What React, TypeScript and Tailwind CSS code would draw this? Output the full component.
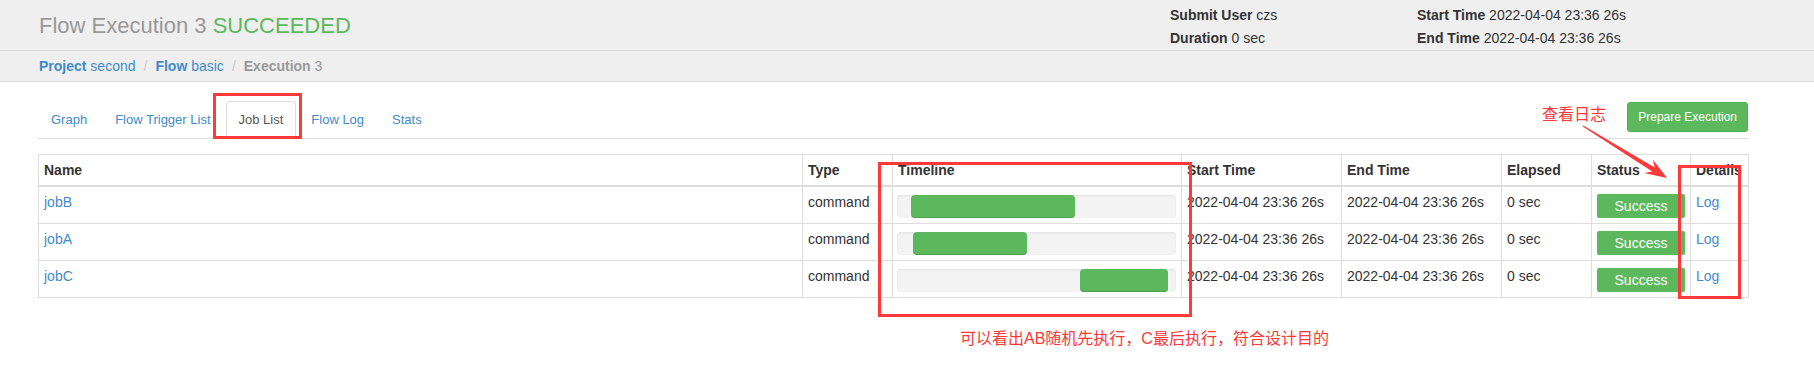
import React from "react";

const jobs = [
  { name: "jobB", left: 14, width: 164 },
  { name: "jobA", left: 16, width: 114 },
  { name: "jobC", left: 183, width: 88 },
];

const tabs = ["Graph", "Flow Trigger List", "Job List", "Flow Log", "Stats"];

export default function App() {
  return (
    <div className="relative w-[1814px] h-[369px] overflow-hidden bg-white font-['Liberation_Sans',Arial,sans-serif] text-[14px] text-[#333]">
      {/* Header */}
      <header className="h-[51px] bg-[#efefef] border-b border-[#dcdcdc] flex">
        <div className="flex-1 flex items-center pl-[39px] text-[22px] text-[#999]">
          Flow Execution 3&nbsp;<span className="text-[#5cb85c]">SUCCEEDED</span>
        </div>
        <div className="w-[644px] grid grid-cols-[247px_1fr] leading-[20px] pt-[5px] text-[14px] text-[#333]">
          <div>
            <b>Submit User</b> czs
          </div>
          <div>
            <b>Start Time</b> 2022-04-04 23:36 26s
          </div>
          <div>
            <b>Duration</b> 0 sec
          </div>
          <div>
            <b>End Time</b> 2022-04-04 23:36 26s
          </div>
        </div>
      </header>

      {/* Breadcrumb */}
      <div className="h-[31px] bg-[#efefef] border-b border-[#dcdcdc] flex items-center pl-[39px] leading-[20px]">
        <a className="text-[#428bca]">
          <b>Project</b> second
        </a>
        <span className="text-[#ccc] px-[8px]">/</span>
        <a className="text-[#428bca]">
          <b>Flow</b> basic
        </a>
        <span className="text-[#ccc] px-[8px]">/</span>
        <span className="text-[#999]">
          <b>Execution</b> 3
        </span>
      </div>

      {/* Main */}
      <div className="ml-[38px] w-[1710px]">
        <div className="mt-[19px] flex items-start border-b border-[#ddd]">
          {tabs.map((t) => (
            <div
              key={t}
              className={
                t === "Job List"
                  ? "mr-[2px] mb-[-1px] px-[12px] py-[8px] leading-[20px] text-[13px] text-[#555] bg-white border border-[#ddd] border-b-white rounded-t-[4px]"
                  : "mr-[2px] mb-[-1px] px-[12px] py-[8px] leading-[20px] text-[13px] text-[#428bca] border border-transparent rounded-t-[4px]"
              }
            >
              {t}
            </div>
          ))}
          <button className="ml-auto mt-[1px] h-[30px] px-[10px] text-[12px] leading-[18px] text-white bg-[#5cb85c] border border-[#4cae4c] rounded-[3px]">
            Prepare Execution
          </button>
        </div>

        <table className="mt-[15px] w-[1710px] table-fixed border-collapse border border-[#ddd]">
          <colgroup>
            <col className="w-[764px]" />
            <col className="w-[90px]" />
            <col className="w-[289px]" />
            <col className="w-[160px]" />
            <col className="w-[160px]" />
            <col className="w-[90px]" />
            <col className="w-[99px]" />
            <col className="w-[58px]" />
          </colgroup>
          <thead>
            <tr>
              {["Name", "Type", "Timeline", "Start Time", "End Time", "Elapsed", "Status", "Details"].map((h) => (
                <th
                  key={h}
                  className="text-left font-bold px-[5px] py-[5px] leading-[20px] border border-[#ddd] border-b-2 whitespace-nowrap overflow-hidden"
                >
                  {h}
                </th>
              ))}
            </tr>
          </thead>
          <tbody>
            {jobs.map((j) => (
              <tr key={j.name}>
                <td className="align-top px-[5px] py-[5px] leading-[20px] border border-[#ddd] text-[#428bca]">{j.name}</td>
                <td className="align-top px-[5px] py-[5px] leading-[20px] border border-[#ddd]">command</td>
                <td className="align-top pl-[4px] pr-[5px] py-[5px] border border-[#ddd]">
                  <div className="mt-[3px] h-[23px] flex bg-[#f3f3f3] rounded-[4px] shadow-[inset_0_1px_2px_rgba(0,0,0,0.08)]">
                    <div
                      className="h-full bg-[#5cb85c] rounded-[4px] shadow-[inset_0_-1px_0_rgba(0,0,0,0.15)]"
                      style={{ marginLeft: j.left, width: j.width }}
                    />
                  </div>
                </td>
                <td className="align-top px-[5px] py-[5px] leading-[20px] border border-[#ddd] whitespace-nowrap">2022-04-04 23:36 26s</td>
                <td className="align-top px-[5px] py-[5px] leading-[20px] border border-[#ddd] whitespace-nowrap">2022-04-04 23:36 26s</td>
                <td className="align-top px-[5px] py-[5px] leading-[20px] border border-[#ddd]">0 sec</td>
                <td className="align-top px-[5px] py-[5px] border border-[#ddd]">
                  <div className="mt-[2px] h-[24px] leading-[24px] bg-[#5cb85c] text-white text-center rounded-[2px]">Success</div>
                </td>
                <td className="align-top px-[5px] py-[5px] leading-[20px] border border-[#ddd] text-[#428bca]">Log</td>
              </tr>
            ))}
          </tbody>
        </table>
      </div>

      {/* Annotations */}
      <div className="absolute left-[213px] top-[93px] w-[89px] h-[46px] border-[3px] border-[#ff3838]" />
      <div className="absolute left-[878px] top-[162px] w-[314px] h-[155px] border-[3px] border-[#ff3838]" />
      <div className="absolute left-[1678px] top-[165px] w-[63px] h-[134px] border-[3px] border-[#ff3838]" />
      <div className="absolute left-[1542px] top-[104px] text-[16px] leading-[22px] text-[#ff3838] font-['Liberation_Sans','Noto_Sans_CJK_SC',sans-serif]">
        查看日志
      </div>
      <div className="absolute left-[960px] top-[328px] text-[16px] leading-[22px] text-[#ff3838] font-['Liberation_Sans','Noto_Sans_CJK_SC',sans-serif] whitespace-nowrap">
        可以看出AB随机先执行，C最后执行，符合设计目的
      </div>
      <svg className="absolute left-0 top-0 pointer-events-none" width="1814" height="369" viewBox="0 0 1814 369">
        <polygon
          fill="#ff3838"
          points="1583.3,125.5 1654.7,167.6 1652.7,159.5 1667,178 1644.1,173.1 1652.3,171.4 1582.7,126.5"
        />
      </svg>
    </div>
  );
}
